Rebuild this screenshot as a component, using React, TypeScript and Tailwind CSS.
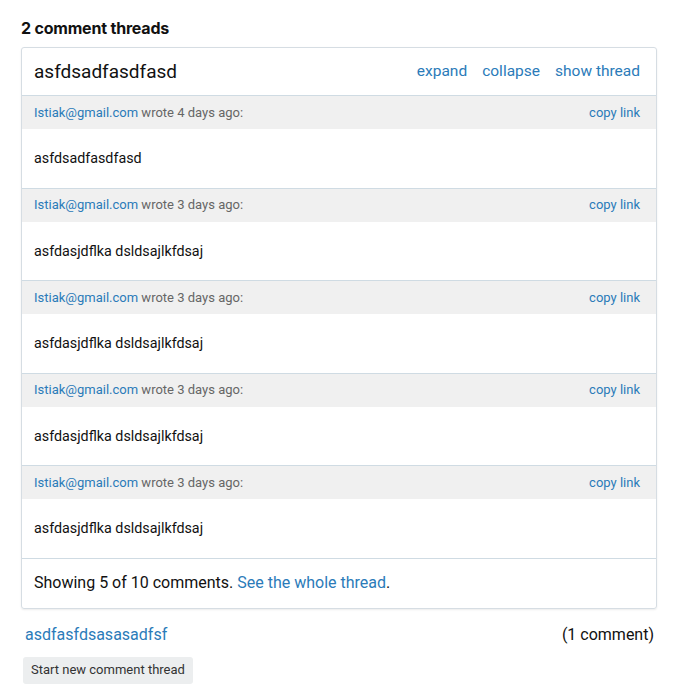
import React from "react";

const comments = [
  { when: "4 days ago", text: "asfdsadfasdfasd" },
  { when: "3 days ago", text: "asfdasjdflka dsldsajlkfdsaj" },
  { when: "3 days ago", text: "asfdasjdflka dsldsajlkfdsaj" },
  { when: "3 days ago", text: "asfdasjdflka dsldsajlkfdsaj" },
  { when: "3 days ago", text: "asfdasjdflka dsldsajlkfdsaj" },
];

export default function App() {
  return (
    <div
      className="bg-white min-h-[693px] pl-[21px] pr-[18px] pt-[18px] text-black"
      style={{ fontFamily: "Roboto, 'Noto Sans', sans-serif" }}
    >
      <h2
        className="text-[16px] leading-5 font-bold text-[#111] mb-[9px]"
        style={{ fontFamily: "Inter, 'Noto Sans', sans-serif", letterSpacing: "-0.2px" }}
      >
        2 comment threads
      </h2>
      <div className="border border-[#d6dde3] rounded-[3px] shadow-[0_1px_2px_rgba(0,0,0,0.08)]">
        <div className="h-[48px] flex items-center justify-between pl-[12px] pr-[16px] border-b border-[#cfdbe3]">
          <span className="text-[19px] text-[#111] pt-[1px]">asfdsadfasdfasd</span>
          <div className="flex gap-[15px] text-[15.5px] text-[#2b7bb9] pt-[1px]">
            <span>expand</span>
            <span>collapse</span>
            <span>show thread</span>
          </div>
        </div>
        {comments.map((c, i) => (
          <div key={i}>
            <div className="h-[33px] bg-[#f0f0f0] flex items-center justify-between pl-[12px] pr-[16px] text-[13px]">
              <span>
                <span className="text-[#2b7bb9]">Istiak@gmail.com</span>
                <span className="text-[#666]"> wrote {c.when}:</span>
              </span>
              <span className="text-[#2b7bb9]">copy link</span>
            </div>
            <div className="h-[59.5px] flex items-center pl-[12px] pt-[1px] text-[14.3px] text-[#111] border-b border-[#cfdbe3]">
              {c.text}
            </div>
          </div>
        ))}
        <div className="h-[49px] flex items-center pl-[12px] text-[16px] text-[#111]">
          <span>
            Showing 5 of 10 comments. <span className="text-[#2b7bb9]">See the whole thread</span>.
          </span>
        </div>
      </div>
      <div className="flex justify-between items-center mt-[14px] pl-[4px] pr-[3px] text-[16px]">
        <span className="text-[#2b7bb9]">asdfasfdsasasadfsf</span>
        <span className="text-[#111]">(1 comment)</span>
      </div>
      <button className="mt-[10px] ml-[2px] h-[27px] px-[8px] bg-[#eceeef] rounded-[3px] text-[13px] text-[#333]">
        Start new comment thread
      </button>
    </div>
  );
}
